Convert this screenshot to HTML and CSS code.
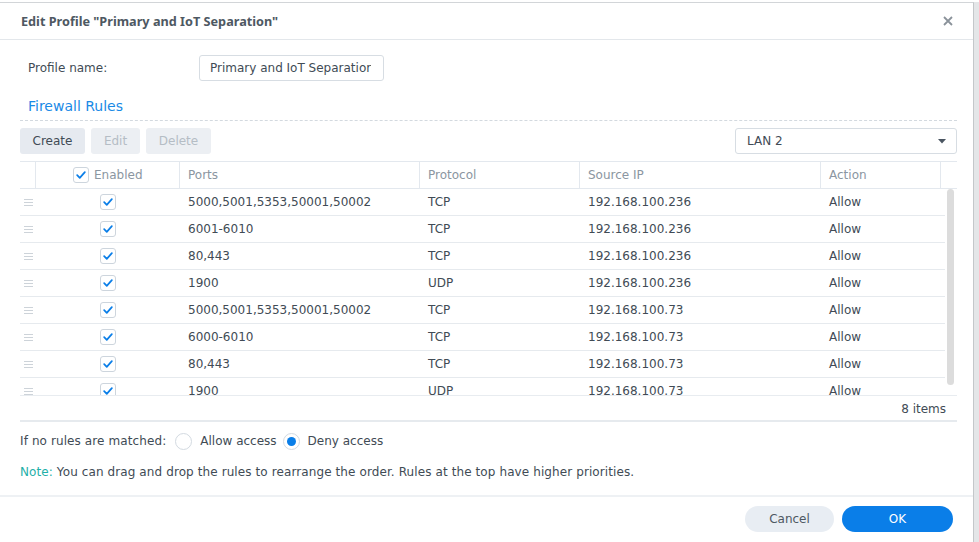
FILE: index.html
```
<!DOCTYPE html>
<html>
<head>
<meta charset="utf-8">
<link rel="stylesheet" href="styles.css">
</head>
<body>
<div class="page">
  <div class="dialog">
    <div class="header">
      <div class="title">Edit Profile "Primary and IoT Separation"</div>
      <svg class="close" width="12" height="12" viewBox="0 0 12 12"><path d="M2 2 L10 10 M10 2 L2 10" stroke="#8a929a" stroke-width="1.8" fill="none"/></svg>
    </div>
    <div class="body">
      <div class="profile-row">
        <div class="label">Profile name:</div>
        <div class="input"><span class="input-text">Primary and IoT Separation</span></div>
      </div>
      <div class="section">Firewall Rules</div>
      <div class="toolbar">
        <div class="btn">Create</div>
        <div class="btn disabled">Edit</div>
        <div class="btn disabled">Delete</div>
        <div class="spacer"></div>
        <div class="select"><span>LAN 2</span><svg width="8" height="5" viewBox="0 0 8 5"><path d="M0 0 L8 0 L4 4.5 Z" fill="#4a5561"/></svg></div>
      </div>
      <div class="table">
        <div class="thead">
          <div class="c c-drag"></div>
          <div class="c c-en"><span class="cb"><svg width="16" height="16" viewBox="0 0 16 16"><path d="M3.6 8.2 L6.6 11.2 L12.4 4.8" stroke="#0a7ee8" stroke-width="2" fill="none" stroke-linecap="round" stroke-linejoin="round"/></svg></span><span class="hlabel">Enabled</span></div>
          <div class="c c-ports">Ports</div>
          <div class="c c-proto">Protocol</div>
          <div class="c c-src">Source IP</div>
          <div class="c c-act">Action</div>
          <div class="c c-end"></div>
        </div>
        <div class="tbody">
          <div class="rows">
            <div class="row"><div class="c c-drag"><svg width="9" height="7" viewBox="0 0 9 7"><path d="M0 0.5H9M0 3.5H9M0 6.5H9" stroke="#cdd3d9" stroke-width="1"/></svg></div><div class="c c-en center"><span class="cb"><svg width="16" height="16" viewBox="0 0 16 16"><path d="M3.6 8.2 L6.6 11.2 L12.4 4.8" stroke="#0a7ee8" stroke-width="2" fill="none" stroke-linecap="round" stroke-linejoin="round"/></svg></span></div><div class="c c-ports">5000,5001,5353,50001,50002</div><div class="c c-proto">TCP</div><div class="c c-src">192.168.100.236</div><div class="c c-act">Allow</div></div>
            <div class="row"><div class="c c-drag"><svg width="9" height="7" viewBox="0 0 9 7"><path d="M0 0.5H9M0 3.5H9M0 6.5H9" stroke="#cdd3d9" stroke-width="1"/></svg></div><div class="c c-en center"><span class="cb"><svg width="16" height="16" viewBox="0 0 16 16"><path d="M3.6 8.2 L6.6 11.2 L12.4 4.8" stroke="#0a7ee8" stroke-width="2" fill="none" stroke-linecap="round" stroke-linejoin="round"/></svg></span></div><div class="c c-ports">6001-6010</div><div class="c c-proto">TCP</div><div class="c c-src">192.168.100.236</div><div class="c c-act">Allow</div></div>
            <div class="row"><div class="c c-drag"><svg width="9" height="7" viewBox="0 0 9 7"><path d="M0 0.5H9M0 3.5H9M0 6.5H9" stroke="#cdd3d9" stroke-width="1"/></svg></div><div class="c c-en center"><span class="cb"><svg width="16" height="16" viewBox="0 0 16 16"><path d="M3.6 8.2 L6.6 11.2 L12.4 4.8" stroke="#0a7ee8" stroke-width="2" fill="none" stroke-linecap="round" stroke-linejoin="round"/></svg></span></div><div class="c c-ports">80,443</div><div class="c c-proto">TCP</div><div class="c c-src">192.168.100.236</div><div class="c c-act">Allow</div></div>
            <div class="row"><div class="c c-drag"><svg width="9" height="7" viewBox="0 0 9 7"><path d="M0 0.5H9M0 3.5H9M0 6.5H9" stroke="#cdd3d9" stroke-width="1"/></svg></div><div class="c c-en center"><span class="cb"><svg width="16" height="16" viewBox="0 0 16 16"><path d="M3.6 8.2 L6.6 11.2 L12.4 4.8" stroke="#0a7ee8" stroke-width="2" fill="none" stroke-linecap="round" stroke-linejoin="round"/></svg></span></div><div class="c c-ports">1900</div><div class="c c-proto">UDP</div><div class="c c-src">192.168.100.236</div><div class="c c-act">Allow</div></div>
            <div class="row"><div class="c c-drag"><svg width="9" height="7" viewBox="0 0 9 7"><path d="M0 0.5H9M0 3.5H9M0 6.5H9" stroke="#cdd3d9" stroke-width="1"/></svg></div><div class="c c-en center"><span class="cb"><svg width="16" height="16" viewBox="0 0 16 16"><path d="M3.6 8.2 L6.6 11.2 L12.4 4.8" stroke="#0a7ee8" stroke-width="2" fill="none" stroke-linecap="round" stroke-linejoin="round"/></svg></span></div><div class="c c-ports">5000,5001,5353,50001,50002</div><div class="c c-proto">TCP</div><div class="c c-src">192.168.100.73</div><div class="c c-act">Allow</div></div>
            <div class="row"><div class="c c-drag"><svg width="9" height="7" viewBox="0 0 9 7"><path d="M0 0.5H9M0 3.5H9M0 6.5H9" stroke="#cdd3d9" stroke-width="1"/></svg></div><div class="c c-en center"><span class="cb"><svg width="16" height="16" viewBox="0 0 16 16"><path d="M3.6 8.2 L6.6 11.2 L12.4 4.8" stroke="#0a7ee8" stroke-width="2" fill="none" stroke-linecap="round" stroke-linejoin="round"/></svg></span></div><div class="c c-ports">6000-6010</div><div class="c c-proto">TCP</div><div class="c c-src">192.168.100.73</div><div class="c c-act">Allow</div></div>
            <div class="row"><div class="c c-drag"><svg width="9" height="7" viewBox="0 0 9 7"><path d="M0 0.5H9M0 3.5H9M0 6.5H9" stroke="#cdd3d9" stroke-width="1"/></svg></div><div class="c c-en center"><span class="cb"><svg width="16" height="16" viewBox="0 0 16 16"><path d="M3.6 8.2 L6.6 11.2 L12.4 4.8" stroke="#0a7ee8" stroke-width="2" fill="none" stroke-linecap="round" stroke-linejoin="round"/></svg></span></div><div class="c c-ports">80,443</div><div class="c c-proto">TCP</div><div class="c c-src">192.168.100.73</div><div class="c c-act">Allow</div></div>
            <div class="row"><div class="c c-drag"><svg width="9" height="7" viewBox="0 0 9 7"><path d="M0 0.5H9M0 3.5H9M0 6.5H9" stroke="#cdd3d9" stroke-width="1"/></svg></div><div class="c c-en center"><span class="cb"><svg width="16" height="16" viewBox="0 0 16 16"><path d="M3.6 8.2 L6.6 11.2 L12.4 4.8" stroke="#0a7ee8" stroke-width="2" fill="none" stroke-linecap="round" stroke-linejoin="round"/></svg></span></div><div class="c c-ports">1900</div><div class="c c-proto">UDP</div><div class="c c-src">192.168.100.73</div><div class="c c-act">Allow</div></div>
          </div>
          <div class="scrollbar"></div>
        </div>
        <div class="tfoot">8 items</div>
      </div>
      <div class="radio-row">
        <span class="rlabel">If no rules are matched:</span>
        <span class="radio"></span><span class="ropt">Allow access</span>
        <span class="radio on"></span><span class="ropt">Deny access</span>
      </div>
      <div class="note"><span class="note-key">Note:</span> You can drag and drop the rules to rearrange the order. Rules at the top have higher priorities.</div>
    </div>
    <div class="footer">
      <div class="fbtn cancel">Cancel</div>
      <div class="fbtn ok">OK</div>
    </div>
  </div>
  <div class="strip"></div>
</div>
</body>
</html>
```
FILE: styles.css
```
* { box-sizing: border-box; }
html, body { margin: 0; padding: 0; }
body {
  font-family: "DejaVu Sans", "Noto Sans", sans-serif;
  font-size: 12px;
  color: #414b55;
  background: #ffffff;
  width: 979px;
  height: 542px;
  overflow: hidden;
}
.page { display: flex; height: 542px; padding-top: 2px; }
.dialog {
  width: 974px;
  height: 540px;
  border-top: 1px solid #d2d5d8;
  border-right: 1px solid #c4c7ca;
  background: #fff;
  display: flex;
  flex-direction: column;
}
.strip { flex: 1; background: #e4e6e8; }
.header {
  height: 37px;
  border-bottom: 1px solid #e3e7eb;
  display: flex;
  align-items: center;
  padding: 0 19px 0 21px;
}
.title { font-family: "Noto Sans", "DejaVu Sans", sans-serif; font-weight: bold; color: #4e5862; font-size: 12.7px; flex: 1; }
.close { display: block; }
.body { padding: 0 16px 0 20px; }
.profile-row { display: flex; align-items: center; margin-top: 15px; height: 26px; }
.label { width: 179px; padding-left: 8px; }
.input {
  width: 185px; height: 26px;
  border: 1px solid #d7dde3; border-radius: 3px;
  padding: 0 0 0 10px;
  line-height: 24px;
}
.input-text { display: block; width: 161px; white-space: nowrap; overflow: hidden; }
.section {
  margin-top: 15px;
  padding-left: 8px;
  font-size: 14px;
  line-height: 20px;
  color: #1a8ae6;
  padding-bottom: 4px;
  border-bottom: 1px dashed #d3d9df;
}
.toolbar { display: flex; align-items: center; margin-top: 7px; height: 26px; gap: 6px; }
.btn {
  height: 26px; line-height: 26px;
  background: #e6eaf0; border-radius: 3px;
  padding: 0 12px;
}
.btn:first-child { width: 65px; text-align: center; padding: 0; }
.btn.disabled { color: #b5bdc5; background: #eceff3; }
.btn.disabled:nth-child(2) { width: 49px; text-align: center; padding: 0; }
.btn.disabled:nth-child(3) { width: 65px; text-align: center; padding: 0; }
.spacer { flex: 1; }
.select {
  width: 222px; height: 26px;
  border: 1px solid #d7dde3; border-radius: 3px;
  display: flex; align-items: center; justify-content: space-between;
  padding: 0 10px 0 11px;
}
.select svg { display: block; }
.table { margin-top: 7px; width: 937px; }
.thead {
  display: flex; height: 28px;
  border-top: 1px solid #e3e8ee; border-bottom: 1px solid #e3e8ee;
  color: #8b96a1;
}
.thead .c { border-right: 1px solid #e3e8ee; height: 26px; }
.thead .c-end { border-right: none; }
.c { display: flex; align-items: center; padding-left: 8px; white-space: nowrap; }
.c-drag { width: 16px; padding-left: 4px; }
.c-en { width: 144px; justify-content: center; padding-left: 0; }
.thead .c-en { justify-content: flex-start; padding-left: 37px; }
.c-ports { width: 240px; }
.c-proto { width: 160px; }
.c-src { width: 241px; }
.c-act { width: 120px; }
.c-end { width: 16px; }
.hlabel { margin-left: 5px; }
.cb {
  width: 16px; height: 16px;
  border: 1px solid #cdd5dd; border-radius: 3px;
  display: inline-flex; align-items: center; justify-content: center;
  background: #fff;
}
.cb svg { display: block; width: 14px; height: 14px; }
.tbody { display: flex; height: 207px; overflow: hidden; border-bottom: 1px solid #e8ecf0; }
.rows { width: 925px; }
.row { display: flex; height: 27px; border-bottom: 1px solid #e6eaee; }
.row .c { height: 26px; }
.row .c-drag svg { display: block; }
.scrollbar {
  width: 7px; height: 196px;
  background: #dcdcdc; border-radius: 4px;
  margin-left: 2px;
}
.tfoot {
  height: 26px; line-height: 26px;
  text-align: right; padding-right: 11px;
  border-bottom: 2px solid #e6eaee;
}
.radio-row { display: flex; align-items: center; margin-top: 11px; height: 16px; }
.rlabel { margin-right: 9px; letter-spacing: 0.1px; }
.radio {
  width: 17px; height: 17px; border-radius: 50%;
  border: 1px solid #d3dae1; background: #fff;
  display: inline-flex; align-items: center; justify-content: center;
  margin-right: 8px;
}
.radio.on::after { content: ""; width: 9px; height: 9px; border-radius: 50%; background: #0a7ee8; }
.ropt { margin-right: 6px; }
.note { margin-top: 15px; line-height: 16px; letter-spacing: 0.1px; }
.note-key { color: #1fb0a8; }
.footer {
  margin-top: 15px;
  border-top: 2px solid #eef1f4;
  display: flex; justify-content: flex-end; gap: 8px;
  padding: 9px 20px 0 0;
}
.fbtn {
  height: 26px; line-height: 26px; border-radius: 13px;
  text-align: center;
}
.cancel { width: 89px; background: #e8edf3; color: #4e5862; }
.ok { width: 111px; background: #0a7ee8; color: #fff; }
```
